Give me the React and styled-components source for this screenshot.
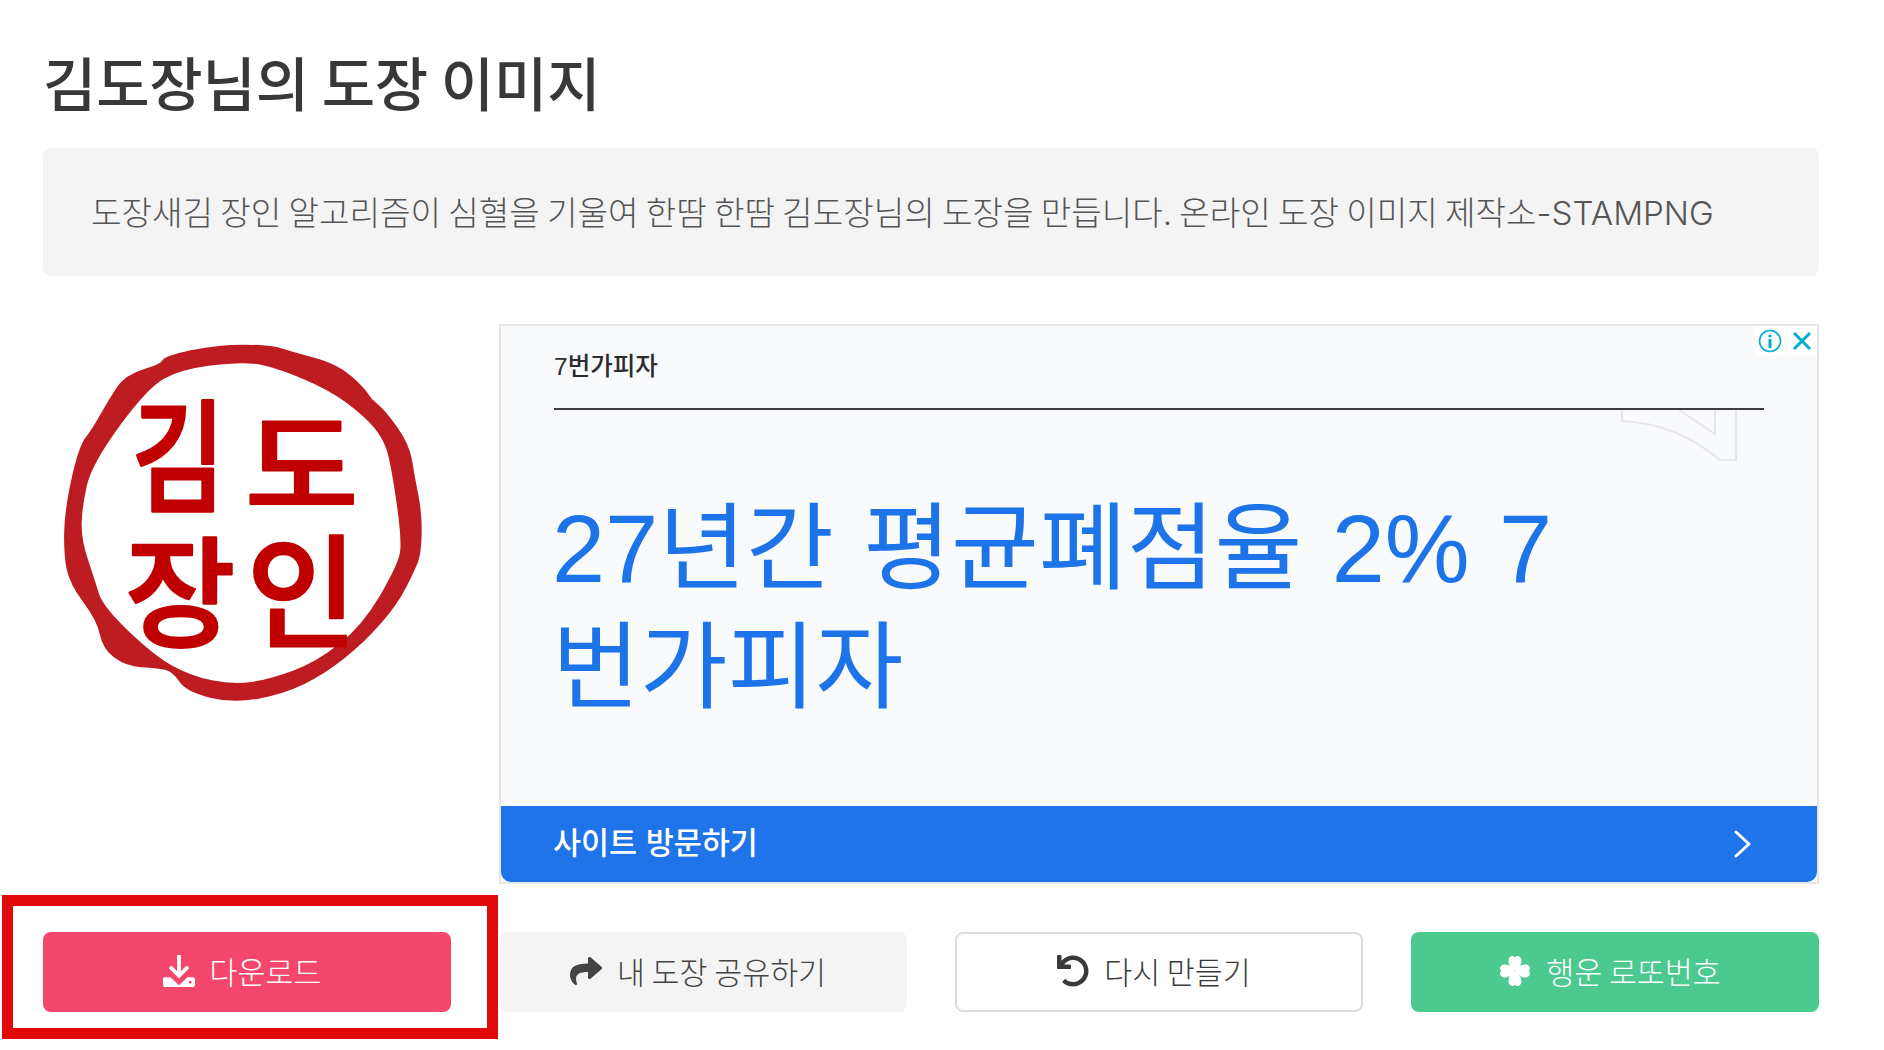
import React from 'react';
import styled, { createGlobalStyle } from 'styled-components';
import { FaShare, FaUndo } from 'react-icons/fa';

const GlobalStyle = createGlobalStyle`
  html, body {
    margin: 0;
    background: #fff;
  }
  body {
    font-family: "Noto Sans CJK KR", "Noto Sans", sans-serif;
    color: #444;
  }
  * {
    box-sizing: border-box;
  }
`;

const Page = styled.div`
  width: 1884px;
  height: 1050px;
  overflow: hidden;
  padding: 0 65px 0 43px;
`;

const Title = styled.h1`
  margin: 0;
  height: 148px;
  padding-top: 39px;
  font-size: 58px;
  line-height: 84px;
  font-weight: 500;
  letter-spacing: -0.2px;
  color: #383838;
`;

const Intro = styled.div`
  height: 128px;
  padding: 0 48px 3px;
  display: flex;
  align-items: center;
  background: #f4f4f4;
  border-radius: 8px;
  font-family: Inter, "Noto Sans CJK KR", sans-serif;
  font-size: 33.2px;
  font-weight: 300;
  word-spacing: -2.2px;
  color: #555;
  white-space: nowrap;
`;

const Grid = styled.div`
  display: grid;
  grid-template-columns: repeat(4, 1fr);
  column-gap: 48px;
  row-gap: 48px;
  margin-top: 48px;
`;

const StampCell = styled.div`
  height: 560px;
`;

const Ad = styled.div`
  grid-column: span 3;
  position: relative;
  height: 560px;
  display: flex;
  flex-direction: column;
  background: #f9fafc;
  border: 2px solid #e6e6e8;
`;

const AdBody = styled.div`
  flex: 1;
  padding: 0 53px;
`;

const AdName = styled.div`
  height: 84px;
  padding-bottom: 5px;
  display: flex;
  align-items: center;
  font-family: "Liberation Sans", "Noto Sans CJK KR", sans-serif;
  font-size: 24.5px;
  font-weight: 500;
  color: #2b2b30;
  border-bottom: 2px solid #3c3c42;
`;

const AdHeadline = styled.div`
  margin-top: 80px;
  margin-left: -2px;
  width: 1040px;
  font-family: "Liberation Sans", "Noto Sans CJK KR", sans-serif;
  font-size: 95.5px;
  line-height: 119px;
  word-spacing: 2.7px;
  color: #1d73e8;
  word-break: break-all;
`;

const AdBar = styled.div`
  height: 76px;
  padding: 0 65px 7px 52px;
  display: flex;
  align-items: center;
  justify-content: space-between;
  background: #1f74e9;
  border-radius: 0 0 10px 10px;
  font-family: "Liberation Sans", "Noto Sans CJK KR", sans-serif;
  font-size: 30.5px;
  font-weight: 500;
  color: #fff;

  svg {
    margin-top: 7px;
  }
`;

const AdGhost = styled.svg`
  position: absolute;
  top: 84px;
  right: 80px;
`;

const AdControl = styled.div`
  position: absolute;
  top: 0;
  right: ${(props) => props.right}px;
  width: 30px;
  height: 30px;
  display: flex;
  align-items: center;
  justify-content: center;
  background: #fff;
`;

const ActionCell = styled.div`
  position: relative;
`;

const Action = styled.button`
  width: 100%;
  height: 80px;
  display: flex;
  align-items: center;
  justify-content: center;
  gap: 15px;
  padding: 0 10px 2px 0;
  font-family: inherit;
  font-size: 30.4px;
  font-weight: 300;
  border-radius: 8px;
  border: ${(props) => (props.outline ? '2px solid #dcdcdc' : '0')};
  background: ${(props) => props.bg};
  color: ${(props) => props.fg};

  svg {
    width: 32px;
    height: 32px;
    flex: none;
  }
`;

const Highlight = styled.div`
  position: absolute;
  top: -37px;
  left: -41px;
  right: -47px;
  bottom: -27px;
  border: 11px solid #e10a0a;
  pointer-events: none;
`;

const StampChar = styled.text`
  font-family: "Noto Sans CJK KR", sans-serif;
  font-weight: 500;
  fill: #c00000;
  stroke: #c00000;
  stroke-width: 7px;
  stroke-linejoin: round;
`;

const ringOuter = [
  [560, 78], [720, 78], [790, 100], [920, 135], [1000, 205], [1020, 240], [1060, 270], [1135, 375],
  [1150, 470], [1172, 580], [1170, 700], [1150, 750], [1100, 850], [1000, 965], [880, 1060],
  [760, 1118], [610, 1146], [470, 1112], [430, 1050], [380, 1040], [290, 1035], [222, 985],
  [205, 900], [122, 790], [105, 700], [108, 570], [150, 380], [190, 330], [240, 240], [288, 168],
  [395, 135], [405, 112],
];

const ringInner = [
  [620, 122], [720, 132], [900, 205], [1010, 290], [1060, 350], [1085, 420], [1120, 660], [1108, 735],
  [1000, 920], [860, 1030], [720, 1082], [610, 1098], [480, 1072], [370, 1010], [215, 862],
  [190, 780], [150, 660], [152, 560], [182, 430], [350, 200], [450, 145],
];

// closed smooth outline through the given points
const smooth = (pts) => {
  const mid = (a, b) => [(a[0] + b[0]) / 2, (a[1] + b[1]) / 2];
  const start = mid(pts[pts.length - 1], pts[0]);
  let d = `M${start[0]} ${start[1]}`;
  pts.forEach((p, i) => {
    const m = mid(p, pts[(i + 1) % pts.length]);
    d += `Q${p[0]} ${p[1]} ${m[0]} ${m[1]}`;
  });
  return d + 'Z';
};

const stampChars = [
  { ch: '김', x: 305, y: 545, size: 305, sy: 1.2 },
  { ch: '도', x: 645, y: 562, size: 370, sy: 0.9 },
  { ch: '장', x: 285, y: 955, size: 360, sy: 1.0 },
  { ch: '인', x: 650, y: 955, size: 360, sy: 1.02 },
];

const Stamp = () => (
  <svg width="408" height="400" viewBox="39 12 1224 1200">
    <path
      d={smooth(ringOuter) + smooth(ringInner)}
      fill="#bd1c22"
      fillRule="evenodd"
      stroke="#bd1c22"
      strokeWidth="8"
    />
    {stampChars.map((c) => (
      <StampChar
        key={c.ch}
        fontSize={c.size}
        transform={`translate(${c.x} ${c.y}) scale(1 ${c.sy})`}
      >
        {c.ch}
      </StampChar>
    ))}
  </svg>
);

const DownloadIcon = () => (
  <svg viewBox="0 0 94 94">
    <path d="M47 2v58M24 38l23 23 23-23" fill="none" stroke="#fff" strokeWidth="11" strokeLinecap="round" />
    <path
      d="M5 65h17l25 24 25-24h17a5 5 0 015 5v19a5 5 0 01-5 5H5a5 5 0 01-5-5V70a5 5 0 015-5z"
      fill="#fff"
    />
    <circle cx="80" cy="80" r="4" fill="#f4476b" />
  </svg>
);

const leaf = 'M50 50C40 42 28 32 30 15 32 2 46 0 50 8 54 0 68 2 70 15 72 32 60 42 50 50Z';

const CloverIcon = () => (
  <svg viewBox="0 0 100 100" fill="#fff">
    {[0, 90, 180, 270].map((deg) => (
      <path key={deg} d={leaf} transform={`rotate(${deg} 50 50)`} />
    ))}
  </svg>
);

const App = () => (
  <Page>
    <GlobalStyle />
    <Title>김도장님의 도장 이미지</Title>
    <Intro>
      도장새김 장인 알고리즘이 심혈을 기울여 한땀 한땀 김도장님의 도장을 만듭니다. 온라인 도장 이미지 제작소-STAMPNG
    </Intro>
    <Grid>
      <StampCell>
        <Stamp />
      </StampCell>
      <Ad>
        <AdBody>
          <AdName>7번가피자</AdName>
          <AdHeadline>27년간 평균폐점율 2% 7 번가피자</AdHeadline>
        </AdBody>
        <AdBar>
          사이트 방문하기
          <svg width="18" height="28" viewBox="0 0 18 28" fill="none" stroke="#fff" strokeWidth="3" strokeLinecap="round" strokeLinejoin="round">
            <path d="M2 2l13 12L2 26" />
          </svg>
        </AdBar>
        <AdGhost width="116" height="52" viewBox="0 0 116 52" fill="none" stroke="#e6e7e9" strokeWidth="2">
          <path d="M1 0v11c40 2 70 16 98 39h16V0" />
          <path d="M58 0l36 24V0" />
        </AdGhost>
        <AdControl right={32}>
          <svg width="24" height="24" viewBox="0 0 24 24">
            <circle cx="12" cy="12" r="10.5" fill="none" stroke="#00aecd" strokeWidth="1.6" />
            <circle cx="12" cy="7" r="1.6" fill="#00aecd" />
            <rect x="10.5" y="10" width="3" height="9" fill="#00aecd" />
          </svg>
        </AdControl>
        <AdControl right={0}>
          <svg width="22" height="22" viewBox="0 0 22 22" stroke="#00aecd" strokeWidth="3">
            <path d="M3 3l16 16M19 3L3 19" />
          </svg>
        </AdControl>
      </Ad>
      <ActionCell>
        <Action bg="#f4476b" fg="#fff">
          <DownloadIcon />
          다운로드
        </Action>
        <Highlight />
      </ActionCell>
      <ActionCell>
        <Action bg="#f4f4f4" fg="#444">
          <FaShare />
          내 도장 공유하기
        </Action>
      </ActionCell>
      <ActionCell>
        <Action bg="#fff" fg="#3a3a3a" outline>
          <FaUndo />
          다시 만들기
        </Action>
      </ActionCell>
      <ActionCell>
        <Action bg="#4cc98f" fg="#fff">
          <CloverIcon />
          행운 로또번호
        </Action>
      </ActionCell>
    </Grid>
  </Page>
);

export default App;
